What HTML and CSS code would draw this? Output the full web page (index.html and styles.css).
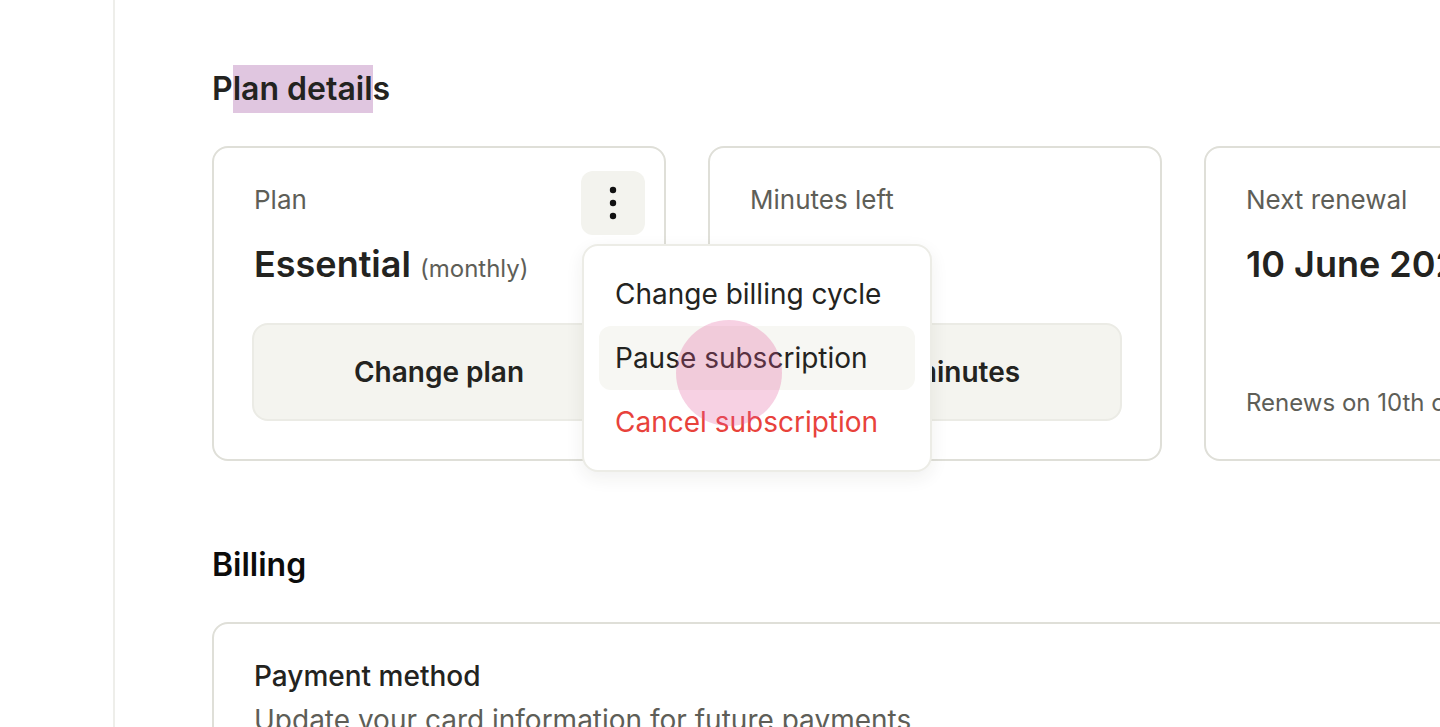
FILE: index.html
```html
<!DOCTYPE html>
<html lang="en">
<head>
<meta charset="utf-8">
<title>Plan details</title>
<link rel="stylesheet" href="styles.css">
</head>
<body>
<div class="layout">
  <aside class="sidebar"></aside>
  <main class="main">
    <section class="section">
      <h2 class="section-title">P<span class="selected">lan detail</span>s</h2>
      <div class="cards">
        <div class="card">
          <div class="card-head">
            <span class="card-label">Plan</span>
            <div class="menu-wrap">
              <button class="kebab" aria-label="More options">
                <svg width="8" height="34" viewBox="0 0 8 34"><circle cx="4" cy="4" r="3.2"/><circle cx="4" cy="17" r="3.2"/><circle cx="4" cy="30" r="3.2"/></svg>
              </button>
              <div class="dropdown">
                <div class="dd-item">Change billing cycle</div>
                <div class="dd-item hover">Pause subscription</div>
                <div class="dd-item danger">Cancel subscription</div>
                <span class="cursor"></span>
              </div>
            </div>
          </div>
          <div class="card-value">Essential <span class="card-sub">(monthly)</span></div>
          <button class="card-btn">Change plan</button>
        </div>
        <div class="card">
          <div class="card-head">
            <span class="card-label">Minutes left</span>
          </div>
          <div class="card-value hidden-value">480</div>
          <button class="card-btn">Add minutes</button>
        </div>
        <div class="card">
          <div class="card-head">
            <span class="card-label">Next renewal</span>
          </div>
          <div class="card-value">10 June 2025</div>
          <div class="card-note">Renews on 10th of every month</div>
        </div>
      </div>
    </section>
    <section class="section billing">
      <h2 class="section-title dark">Billing</h2>
      <div class="wide-card">
        <div class="wide-title">Payment method</div>
        <div class="wide-desc">Update your card information for future payments</div>
      </div>
    </section>
  </main>
</div>
</body>
</html>
```
FILE: styles.css
```css
* { box-sizing: border-box; }
html, body {
  margin: 0;
  padding: 0;
  width: 1440px;
  height: 727px;
  overflow: hidden;
  background: #ffffff;
  font-family: Inter, "Noto Sans", sans-serif;
  color: #232320;
}
.layout {
  display: flex;
  height: 727px;
}
.sidebar {
  flex: 0 0 115px;
  border-right: 2px solid #eeeeea;
}
.main {
  flex: 0 0 auto;
  padding: 65px 0 0 97px;
  width: 1600px;
}
.section-title {
  margin: 0;
  font-size: 32px;
  line-height: 48px;
  font-weight: 600;
  color: #232320;
}
.section-title.dark { color: #0c0c0b; }
.selected {
  display: inline-block;
  background: #e0c6e0;
  line-height: 48px;
}
.cards {
  display: flex;
  gap: 42px;
  margin-top: 33px;
  width: 1446px;
}
.card {
  flex: 0 0 454px;
  height: 315px;
  border: 2px solid #dfdfd8;
  border-radius: 16px;
  padding: 23px 38px 38px 38px;
  display: flex;
  flex-direction: column;
}
.card-head {
  display: flex;
  align-items: center;
  justify-content: space-between;
  min-height: 64px;
  margin-right: -19px;
}
.card-label {
  font-size: 26px;
  line-height: 32px;
  color: #5e5e57;
  padding-left: 2px;
  padding-bottom: 6px;
}
.menu-wrap {
  position: relative;
}
.kebab {
  width: 64px;
  height: 64px;
  border: none;
  border-radius: 12px;
  background: #f3f3ee;
  display: flex;
  align-items: center;
  justify-content: center;
  padding: 0;
}
.kebab svg { fill: #111; }
.dropdown {
  position: absolute;
  top: 73px;
  left: 1px;
  width: 350px;
  background: #fff;
  border: 2px solid #ececE6;
  border-radius: 16px;
  padding: 16px 15px 16px 15px;
  box-shadow: 0 6px 18px rgba(40, 40, 30, 0.07);
  z-index: 10;
}
.dd-item {
  height: 64px;
  display: flex;
  align-items: center;
  padding-left: 16px;
  font-size: 28px;
  color: #232320;
  border-radius: 12px;
}
.dd-item.hover { background: #f7f7f3; }
.dd-item.danger { color: #e8423b; }
.cursor {
  position: absolute;
  left: 92px;
  top: 74px;
  width: 106px;
  height: 106px;
  border-radius: 50%;
  background: rgba(226, 90, 155, 0.28);
  pointer-events: none;
}
.card-value {
  margin-top: 7px;
  font-size: 36px;
  line-height: 44px;
  font-weight: 600;
  color: #232320;
  padding-left: 2px;
  white-space: nowrap;
}
.card-sub {
  font-size: 24px;
  font-weight: 400;
  color: #5e5e57;
}
.card-btn {
  margin-top: auto;
  height: 98px;
  width: 100%;
  border: 2px solid #ebebe5;
  background: #f4f4ef;
  border-radius: 16px;
  font-family: inherit;
  font-size: 28px;
  font-weight: 600;
  color: #232320;
}
.card-note {
  margin-top: auto;
  font-size: 24px;
  line-height: 32px;
  color: #5e5e57;
  padding-left: 2px;
  margin-bottom: 2px;
  white-space: nowrap;
}
.billing {
  margin-top: 80px;
}
.wide-card {
  margin-top: 33px;
  width: 1446px;
  height: 300px;
  border: 2px solid #dfdfd8;
  border-radius: 16px;
  padding: 32px 40px;
}
.wide-title {
  font-size: 28px;
  line-height: 40px;
  font-weight: 500;
  color: #232320;
}
.wide-desc {
  margin-top: 4px;
  font-size: 28px;
  line-height: 40px;
  color: #5e5e57;
}
```
